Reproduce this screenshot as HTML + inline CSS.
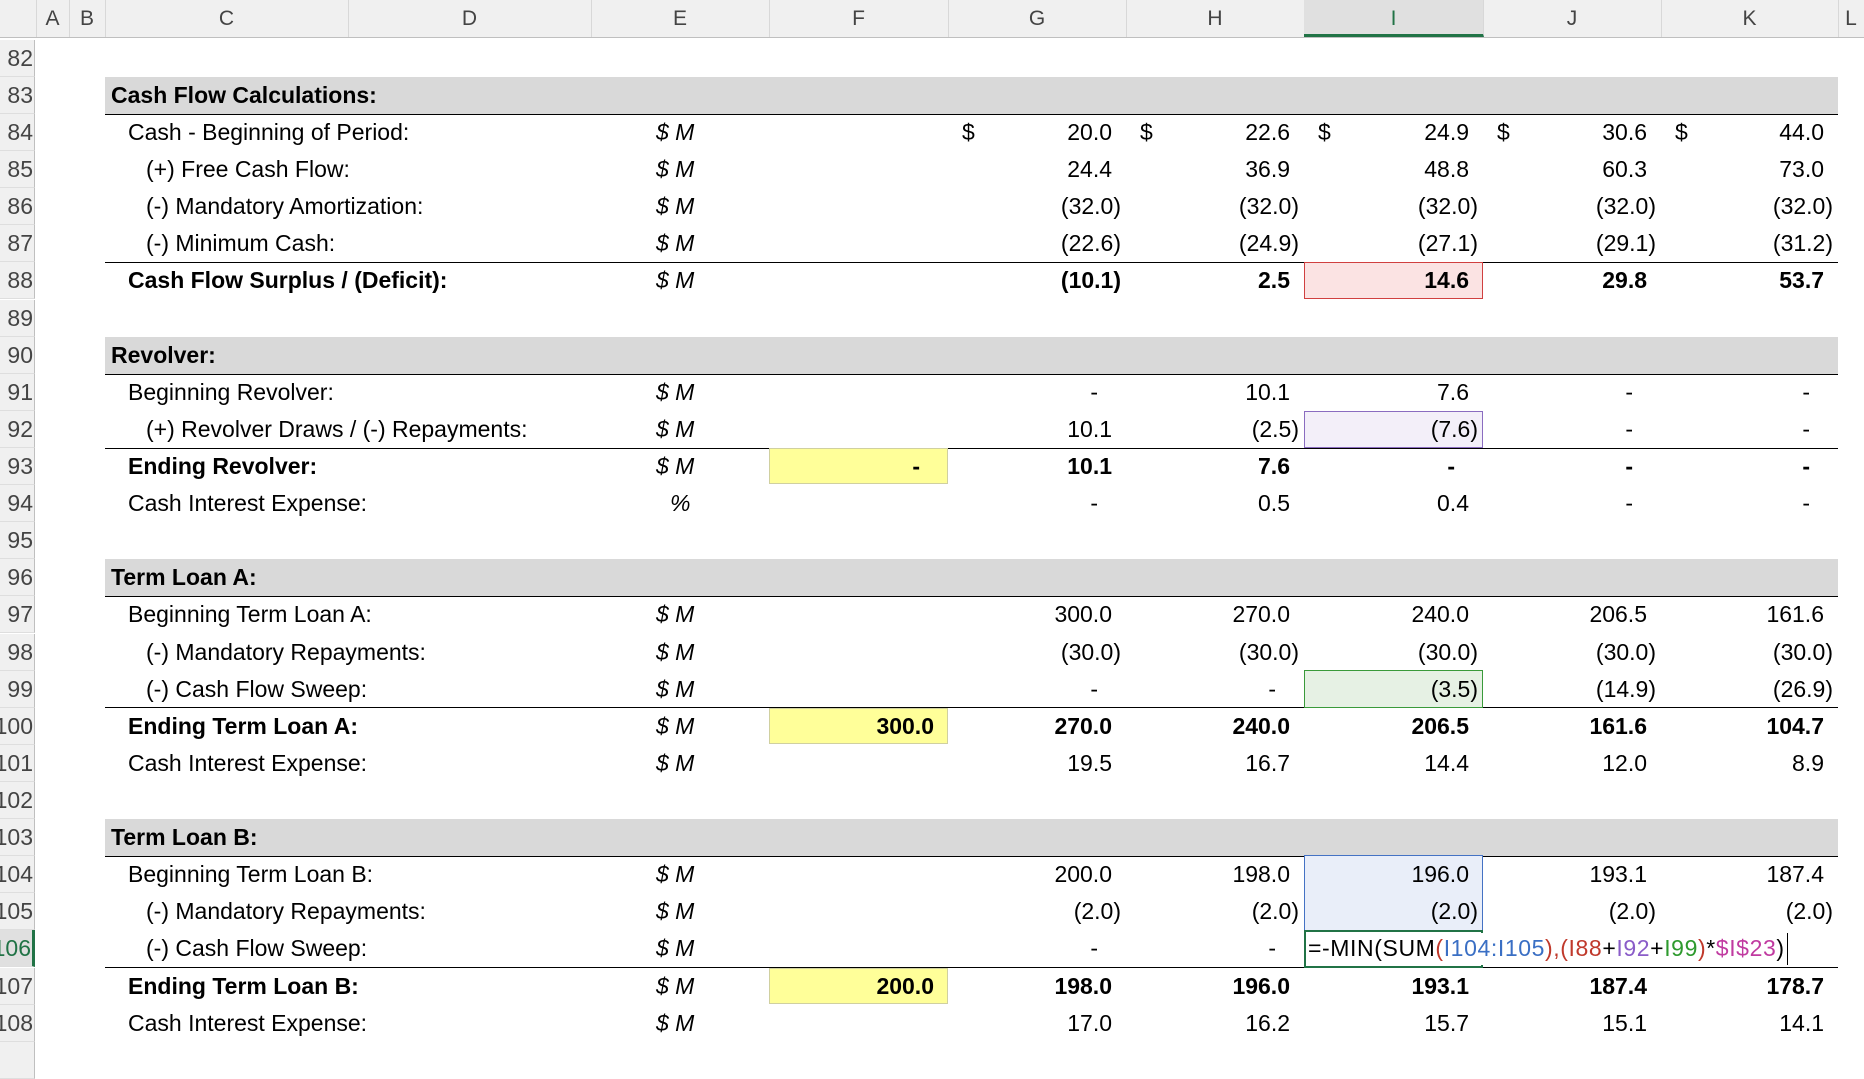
<!DOCTYPE html>
<html><head><meta charset="utf-8"><style>
body{margin:0;width:1864px;height:1048px;overflow:hidden;background:#fff;font-family:"Liberation Sans",sans-serif;font-size:23px;color:#000;position:relative}
.hdr{position:absolute;top:0;left:0;width:1864px;height:37px;background:#f0f0f0;border-bottom:1px solid #bfbfbf}
.ch{position:absolute;top:0;height:37px;line-height:38px;text-align:center;color:#444;font-size:21px;border-right:1px solid #d8d8d8}
.rh{position:absolute;left:0;width:35px;height:37px;background:#f0f0f0;border-right:1px solid #bfbfbf;border-bottom:1px solid #dedede;color:#444;font-size:23px;line-height:37px;text-align:right;overflow:hidden;white-space:nowrap;box-sizing:border-box;padding-right:1px;direction:rtl}
.r{position:absolute;left:0;width:1864px;height:37px}
.c{position:absolute;top:0;height:37px;line-height:37px;white-space:nowrap;box-sizing:border-box}
.n{text-align:right;padding-right:14px}
.ng{text-align:right;padding-right:5px}
.d{text-align:right;padding-right:28px}
.G{left:948px;width:178px}.H{left:1126px;width:178px}.I{left:1304px;width:179px}.J{left:1483px;width:178px}.K{left:1661px;width:177px}.F{left:769px;width:179px}
.l0{left:128px}.l1{left:146px}.h{left:111px;font-weight:bold}
.u{left:656px;font-style:italic}
.b{font-weight:bold}
.band{position:absolute;left:105px;width:1733px;height:37px;background:#d9d9d9}
.line{position:absolute;left:105px;width:1733px;height:0;border-top:1.5px solid #000}
.dl{position:absolute;top:0;line-height:37px}
.y{background:#ffff99;border:1px solid #d0d0a0;height:36px}
</style></head><body>
<div class="hdr"></div>
<div class="ch" style="left:0;width:36px;background:#f0f0f0"></div>
<div class="ch" style="left:36px;width:33px">A</div>
<div class="ch" style="left:69px;width:36px">B</div>
<div class="ch" style="left:105px;width:243px">C</div>
<div class="ch" style="left:348px;width:243px">D</div>
<div class="ch" style="left:591px;width:178px">E</div>
<div class="ch" style="left:769px;width:179px">F</div>
<div class="ch" style="left:948px;width:178px">G</div>
<div class="ch" style="left:1126px;width:178px">H</div>
<div class="ch" style="left:1304px;width:179px;background:#e0e0e0;height:34px;border-bottom:3px solid #217346;color:#217346">I</div>
<div class="ch" style="left:1483px;width:178px">J</div>
<div class="ch" style="left:1661px;width:177px">K</div>
<div class="ch" style="left:1838px;width:26px;border:none">L</div>

<div class="band" style="top:77px"></div>
<div class="band" style="top:337px"></div>
<div class="band" style="top:559px"></div>
<div class="band" style="top:819px"></div>
<div class="line" style="top:114px"></div>
<div class="line" style="top:262px"></div>
<div class="line" style="top:374px"></div>
<div class="line" style="top:448px"></div>
<div class="line" style="top:596px"></div>
<div class="line" style="top:707px"></div>
<div class="line" style="top:856px"></div>
<div class="line" style="top:967px"></div>

<div style="position:absolute;left:1304px;top:262px;width:179px;height:37px;box-sizing:border-box;background:#fbe3e3;border:1.5px solid #d04040"></div>
<div style="position:absolute;left:1304px;top:411px;width:179px;height:37px;box-sizing:border-box;background:#f3eff9;border:1.5px solid #8a6cc0"></div>
<div style="position:absolute;left:1304px;top:670px;width:179px;height:38px;box-sizing:border-box;background:#e6f1e4;border:1.5px solid #3a9a3a"></div>
<div style="position:absolute;left:1304px;top:855px;width:179px;height:76px;box-sizing:border-box;background:#e9eef9;border:1.5px solid #4472c4"></div>
<div style="position:absolute;left:1304px;top:930px;width:179px;height:38px;box-sizing:border-box;border:2px solid #217346;background:#fff"></div>
<div class="c y" style="left:769px;width:179px;top:448px"></div>
<div class="c y" style="left:769px;width:179px;top:708px"></div>
<div class="c y" style="left:769px;width:179px;top:968px"></div>

<div class="rh" style="top:40px">82</div><div class="rh" style="top:77px">83</div><div class="rh" style="top:114px">84</div><div class="rh" style="top:151px">85</div><div class="rh" style="top:188px">86</div><div class="rh" style="top:225px">87</div><div class="rh" style="top:262px">88</div><div class="rh" style="top:300px">89</div><div class="rh" style="top:337px">90</div><div class="rh" style="top:374px">91</div><div class="rh" style="top:411px">92</div><div class="rh" style="top:448px">93</div><div class="rh" style="top:485px">94</div><div class="rh" style="top:522px">95</div><div class="rh" style="top:559px">96</div><div class="rh" style="top:596px">97</div><div class="rh" style="top:634px">98</div><div class="rh" style="top:671px">99</div><div class="rh" style="top:708px">100</div><div class="rh" style="top:745px">101</div><div class="rh" style="top:782px">102</div><div class="rh" style="top:819px">103</div><div class="rh" style="top:856px">104</div><div class="rh" style="top:893px">105</div><div class="rh" style="top:930px;background:#e0e0e0;color:#217346;border-right:3px solid #217346">106</div><div class="rh" style="top:968px">107</div><div class="rh" style="top:1005px">108</div><div class="rh" style="top:1042px"></div>

<div class="r" style="top:77px"><span class="c h">Cash Flow Calculations:</span></div>
<div class="r" style="top:114px"><span class="c l0">Cash - Beginning of Period:</span><span class="c u">$ M</span>
<span class="c dl" style="left:962px">$</span><span class="c dl" style="left:1140px">$</span><span class="c dl" style="left:1318px">$</span><span class="c dl" style="left:1497px">$</span><span class="c dl" style="left:1675px">$</span>
<span class="c n G">20.0</span><span class="c n H">22.6</span><span class="c n I">24.9</span><span class="c n J">30.6</span><span class="c n K">44.0</span></div>
<div class="r" style="top:151px"><span class="c l1">(+) Free Cash Flow:</span><span class="c u">$ M</span><span class="c n G">24.4</span><span class="c n H">36.9</span><span class="c n I">48.8</span><span class="c n J">60.3</span><span class="c n K">73.0</span></div>
<div class="r" style="top:188px"><span class="c l1">(-) Mandatory Amortization:</span><span class="c u">$ M</span><span class="c ng G">(32.0)</span><span class="c ng H">(32.0)</span><span class="c ng I">(32.0)</span><span class="c ng J">(32.0)</span><span class="c ng K">(32.0)</span></div>
<div class="r" style="top:225px"><span class="c l1">(-) Minimum Cash:</span><span class="c u">$ M</span><span class="c ng G">(22.6)</span><span class="c ng H">(24.9)</span><span class="c ng I">(27.1)</span><span class="c ng J">(29.1)</span><span class="c ng K">(31.2)</span></div>
<div class="r b" style="top:262px"><span class="c l0">Cash Flow Surplus / (Deficit):</span><span class="c u" style="font-weight:normal">$ M</span><span class="c ng G">(10.1)</span><span class="c n H">2.5</span><span class="c n I">14.6</span><span class="c n J">29.8</span><span class="c n K">53.7</span></div>

<div class="r" style="top:337px"><span class="c h">Revolver:</span></div>
<div class="r" style="top:374px"><span class="c l0">Beginning Revolver:</span><span class="c u">$ M</span><span class="c d G">-</span><span class="c n H">10.1</span><span class="c n I">7.6</span><span class="c d J">-</span><span class="c d K">-</span></div>
<div class="r" style="top:411px"><span class="c l1">(+) Revolver Draws / (-) Repayments:</span><span class="c u">$ M</span><span class="c n G">10.1</span><span class="c ng H">(2.5)</span><span class="c ng I">(7.6)</span><span class="c d J">-</span><span class="c d K">-</span></div>
<div class="r b" style="top:448px"><span class="c l0">Ending Revolver:</span><span class="c u" style="font-weight:normal">$ M</span><span class="c d F">-</span><span class="c n G">10.1</span><span class="c n H">7.6</span><span class="c d I">-</span><span class="c d J">-</span><span class="c d K">-</span></div>
<div class="r" style="top:485px"><span class="c l0">Cash Interest Expense:</span><span class="c u" style="left:670px">%</span><span class="c d G">-</span><span class="c n H">0.5</span><span class="c n I">0.4</span><span class="c d J">-</span><span class="c d K">-</span></div>

<div class="r" style="top:559px"><span class="c h">Term Loan A:</span></div>
<div class="r" style="top:596px"><span class="c l0">Beginning Term Loan A:</span><span class="c u">$ M</span><span class="c n G">300.0</span><span class="c n H">270.0</span><span class="c n I">240.0</span><span class="c n J">206.5</span><span class="c n K">161.6</span></div>
<div class="r" style="top:634px"><span class="c l1">(-) Mandatory Repayments:</span><span class="c u">$ M</span><span class="c ng G">(30.0)</span><span class="c ng H">(30.0)</span><span class="c ng I">(30.0)</span><span class="c ng J">(30.0)</span><span class="c ng K">(30.0)</span></div>
<div class="r" style="top:671px"><span class="c l1">(-) Cash Flow Sweep:</span><span class="c u">$ M</span><span class="c d G">-</span><span class="c d H">-</span><span class="c ng I">(3.5)</span><span class="c ng J">(14.9)</span><span class="c ng K">(26.9)</span></div>
<div class="r b" style="top:708px"><span class="c l0">Ending Term Loan A:</span><span class="c u" style="font-weight:normal">$ M</span><span class="c n F">300.0</span><span class="c n G">270.0</span><span class="c n H">240.0</span><span class="c n I">206.5</span><span class="c n J">161.6</span><span class="c n K">104.7</span></div>
<div class="r" style="top:745px"><span class="c l0">Cash Interest Expense:</span><span class="c u">$ M</span><span class="c n G">19.5</span><span class="c n H">16.7</span><span class="c n I">14.4</span><span class="c n J">12.0</span><span class="c n K">8.9</span></div>

<div class="r" style="top:819px"><span class="c h">Term Loan B:</span></div>
<div class="r" style="top:856px"><span class="c l0">Beginning Term Loan B:</span><span class="c u">$ M</span><span class="c n G">200.0</span><span class="c n H">198.0</span><span class="c n I">196.0</span><span class="c n J">193.1</span><span class="c n K">187.4</span></div>
<div class="r" style="top:893px"><span class="c l1">(-) Mandatory Repayments:</span><span class="c u">$ M</span><span class="c ng G">(2.0)</span><span class="c ng H">(2.0)</span><span class="c ng I">(2.0)</span><span class="c ng J">(2.0)</span><span class="c ng K">(2.0)</span></div>
<div class="r" style="top:930px"><span class="c l1">(-) Cash Flow Sweep:</span><span class="c u">$ M</span><span class="c d G">-</span><span class="c d H">-</span>
<span class="c" style="left:1308px;background:#fff;padding-right:2px;border-right:1.5px solid #000;height:32px;top:3px;line-height:31px;letter-spacing:0.6px">=-MIN(SUM<span style="color:#c0392b">(</span><span style="color:#3a6fc4">I104:I105</span><span style="color:#c0392b">),(I88</span>+<span style="color:#8a5cc8">I92</span>+<span style="color:#2e9a2e">I99</span><span style="color:#c0392b">)</span>*<span style="color:#c03aa0">$I$23</span>)</span></div>
<div class="r b" style="top:968px"><span class="c l0">Ending Term Loan B:</span><span class="c u" style="font-weight:normal">$ M</span><span class="c n F">200.0</span><span class="c n G">198.0</span><span class="c n H">196.0</span><span class="c n I">193.1</span><span class="c n J">187.4</span><span class="c n K">178.7</span></div>
<div class="r" style="top:1005px"><span class="c l0">Cash Interest Expense:</span><span class="c u">$ M</span><span class="c n G">17.0</span><span class="c n H">16.2</span><span class="c n I">15.7</span><span class="c n J">15.1</span><span class="c n K">14.1</span></div>
</body></html>
